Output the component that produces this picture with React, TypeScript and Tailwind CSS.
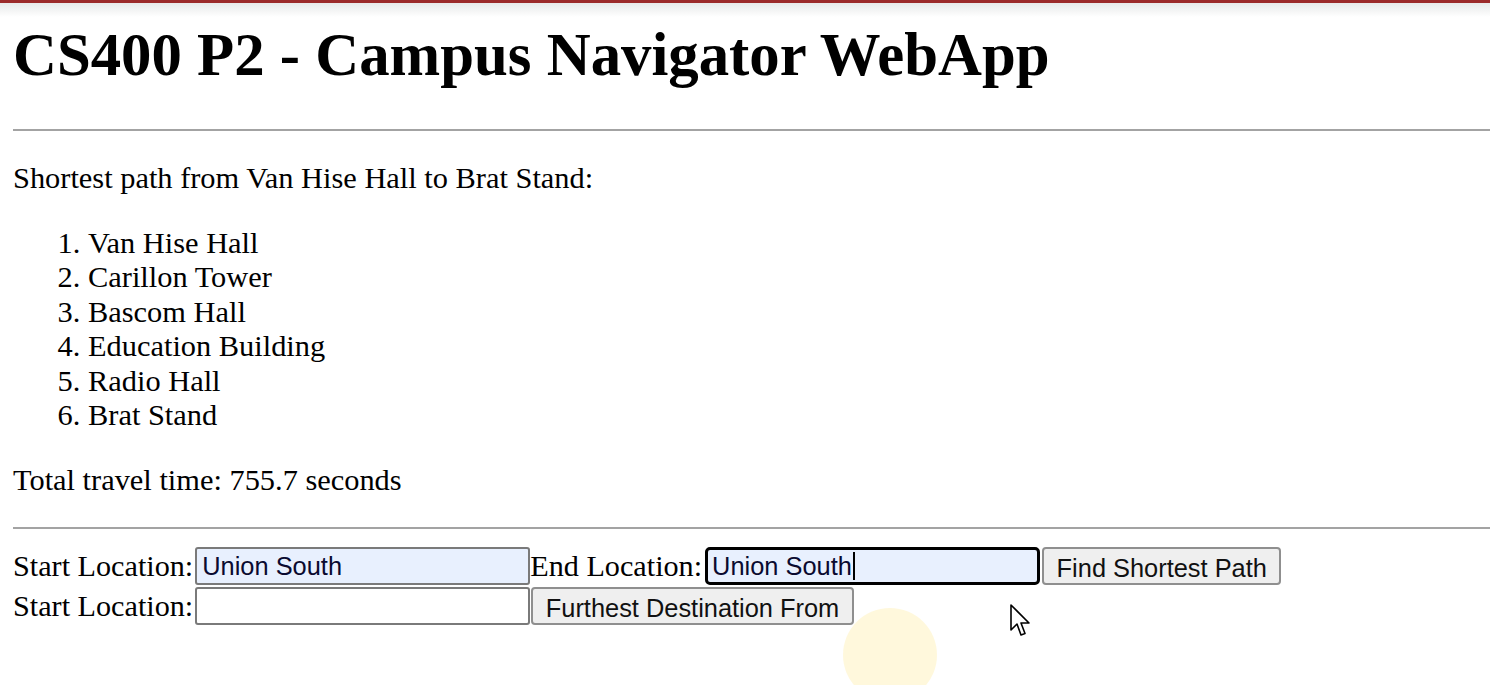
export default function App() {
  const path = [
    'Van Hise Hall',
    'Carillon Tower',
    'Bascom Hall',
    'Education Building',
    'Radio Hall',
    'Brat Stand',
  ];

  return (
    <div className="relative min-h-screen overflow-hidden bg-white text-black font-['Liberation_Serif','Times_New_Roman',serif]">
      {/* browser edge */}
      <div className="h-[3px] bg-[#9b2a2a]" />
      <div className="h-[14px] bg-gradient-to-b from-[#e7e9e9] to-white" />

      <h1 className="mt-[3px] pl-[13px] text-[60.8px] font-bold leading-[69px]">
        CS400 P2 - Campus Navigator WebApp
      </h1>

      <hr className="mt-[40px] ml-[13px] h-[2px] border-0 bg-[#a3a3a3]" />

      <p className="mt-[30px] pl-[13px] text-[30.4px] leading-[34.5px]">
        Shortest path from Van Hise Hall to Brat Stand:
      </p>

      <ol className="mt-[30px] list-decimal pl-[88px] text-[30.4px] leading-[34.5px]">
        {path.map((p) => (
          <li key={p}>{p}</li>
        ))}
      </ol>

      <p className="mt-[30px] pl-[13px] text-[30.4px] leading-[34.5px]">
        Total travel time: 755.7 seconds
      </p>

      <hr className="mt-[30px] ml-[13px] h-[2px] border-0 bg-[#a3a3a3]" />

      {/* forms */}
      <div className="mt-[18px] flex flex-col gap-[2px] pl-[13px] text-[30.2px]">
        <div className="flex items-center">
          <span className="leading-[38px]">Start Location:</span>
          <div className="ml-[2px] flex h-[38px] w-[335px] items-center rounded-[3px] border-2 border-[#7a7a7a] bg-[#e8f0fe] px-[5px] font-['Liberation_Sans',Arial,sans-serif] text-[25.4px] text-[#0a0a30]">
            Union South
          </div>
          <span className="leading-[38px]">End Location:</span>
          <div className="ml-[3px] flex h-[38px] w-[335px] items-center rounded-[5px] border-[3px] border-black bg-[#e8f0fe] px-[4px] font-['Liberation_Sans',Arial,sans-serif] text-[25.4px] text-[#0a0a30]">
            Union South
            <span className="ml-[1px] inline-block h-[28px] w-[2px] bg-black" />
          </div>
          <button className="ml-[2px] h-[38px] rounded-[4px] border-2 border-[#8f8f8f] bg-[#efefef] px-[12.5px] font-['Liberation_Sans',Arial,sans-serif] text-[25.4px] text-[#111]">
            Find Shortest Path
          </button>
        </div>
        <div className="flex items-center">
          <span className="leading-[38px]">Start Location:</span>
          <div className="ml-[2px] h-[38px] w-[335px] rounded-[3px] border-2 border-[#7a7a7a] bg-white" />
          <button className="ml-[1px] h-[38px] rounded-[4px] border-2 border-[#8f8f8f] bg-[#efefef] px-[12.5px] font-['Liberation_Sans',Arial,sans-serif] text-[25.4px] text-[#111]">
            Furthest Destination From
          </button>
        </div>
      </div>

      {/* click highlight */}
      <div className="absolute left-[843px] top-[608px] h-[94px] w-[94px] rounded-full bg-[#fff4c4] opacity-60" />

      {/* mouse cursor */}
      <svg
        className="absolute left-[1010px] top-[604px]"
        width="24"
        height="36"
        viewBox="0 0 24 36"
      >
        <path
          d="M1 1 L1 26 L7 20 L11 31 L15 29.5 L11 19 L19 19 Z"
          fill="white"
          stroke="black"
          strokeWidth="1.6"
          strokeLinejoin="round"
        />
      </svg>
    </div>
  );
}
